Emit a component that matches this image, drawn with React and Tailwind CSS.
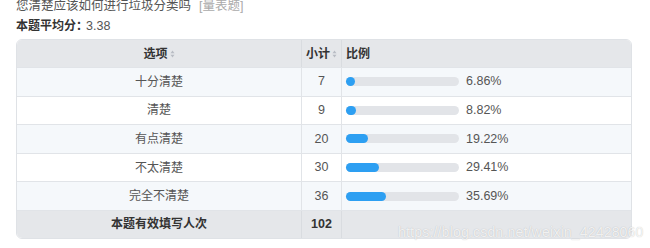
import { useState } from 'react'

const rows = [
  { label: '十分清楚', count: 7, pct: 6.86 },
  { label: '清楚', count: 9, pct: 8.82 },
  { label: '有点清楚', count: 20, pct: 19.22 },
  { label: '不太清楚', count: 30, pct: 29.41 },
  { label: '完全不清楚', count: 36, pct: 35.69 },
]

function SortIcon() {
  return (
    <svg width="5" height="8" viewBox="0 0 5 8" className="ml-[2px] inline-block">
      <path d="M2.5 0.5 L4.5 3.3 L0.5 3.3 Z" fill="#b8bcc4" />
      <path d="M2.5 7.5 L4.5 4.7 L0.5 4.7 Z" fill="#b8bcc4" />
    </svg>
  )
}

function Bar({ pct }) {
  const fill = Math.max(9, (pct / 100) * 113)
  return (
    <div className="flex items-center">
      <div className="h-[9px] w-[113px] rounded-full bg-[#e2e4e8]">
        <div
          className="h-[9px] rounded-full bg-[#2d9ff2]"
          style={{ width: `${fill}px` }}
        />
      </div>
      <span className="ml-[7px] text-[12.5px] text-[#555]">{pct.toFixed(2)}%</span>
    </div>
  )
}

export default function App() {
  const [sortKey] = useState(null)

  return (
    <div className="relative h-[248px] w-[650px] overflow-hidden bg-white px-4 font-['Liberation_Sans','Noto_Sans_CJK_SC',sans-serif] text-[12px] text-[#555]">
      <div className="-mt-[4px] flex h-[20px] items-center text-[12.5px]">
        <span className="text-[#555]">您清楚应该如何进行垃圾分类吗</span>
        <span className="ml-[8px] text-[#aaa]">[量表题]</span>
      </div>
      <div className="-mt-[1px] flex h-[22px] items-center">
        <span className="font-bold text-[#333]">本题平均分：</span>
        <span className="-ml-[2px] text-[12.5px] text-[#555]">3.38</span>
      </div>

      <div className="mt-[2px] w-[616px] overflow-hidden rounded-md border border-[#dfe2e6]" data-sort={sortKey}>
        <div className="grid h-[27px] grid-cols-[285px_40px_1fr] bg-[#e5e7ea] font-bold text-[#333]">
          <div className="flex items-center justify-center border-r border-[#d9dce0]">
            选项<SortIcon />
          </div>
          <div className="flex items-center justify-center border-r border-[#d9dce0]">
            小计<SortIcon />
          </div>
          <div className="flex items-center pl-[4px]">比例</div>
        </div>

        {rows.map((row, i) => (
          <div
            key={row.label}
            className={`grid h-[28.6px] grid-cols-[285px_40px_1fr] border-t border-[#e1e4e8] ${
              i % 2 === 0 ? 'bg-[#f5f8fb]' : 'bg-white'
            }`}
          >
            <div className="flex items-center justify-center border-r border-[#e1e4e8]">
              {row.label}
            </div>
            <div className="flex items-center justify-center border-r border-[#e1e4e8] text-[12.5px]">
              {row.count}
            </div>
            <div className="flex items-center pl-[4px]">
              <Bar pct={row.pct} />
            </div>
          </div>
        ))}

        <div className="grid h-[28px] grid-cols-[285px_40px_1fr] border-t border-[#e1e4e8] bg-[#e5e7ea] font-bold text-[#333]">
          <div className="flex items-center justify-center border-r border-[#d9dce0]">
            本题有效填写人次
          </div>
          <div className="flex items-center justify-center border-r border-[#d9dce0] text-[12.5px]">
            102
          </div>
          <div />
        </div>
      </div>

      <div className="absolute left-[398px] top-[222px] text-[14px] tracking-[0.2px] text-white/80 [text-shadow:0_0_1px_rgba(0,0,0,0.25)]">
        https://blog.csdn.net/weixin_42428060
      </div>
    </div>
  )
}
